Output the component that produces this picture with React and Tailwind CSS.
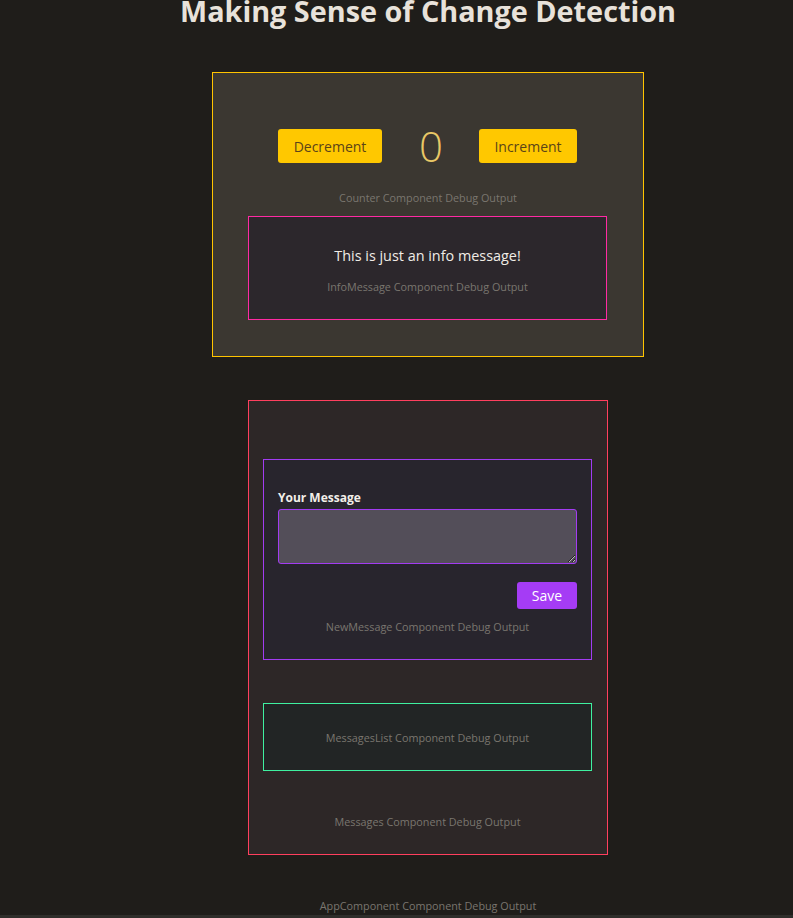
import { useState } from 'react';

const font = { fontFamily: '"Open Sans", "Liberation Sans", sans-serif' };

function DebugOutput({ name, className = '' }) {
  return (
    <p className={`text-[10.8px] leading-4 text-center text-[#7a766f] ${className}`}>
      {name} Component Debug Output
    </p>
  );
}

function InfoMessage() {
  return (
    <div className="self-start ml-[35px] w-[359px] h-[104px] mt-[10px] border border-[#ff2aa3] bg-[#2c272c] pt-[28px]">
      <p className="text-[14.4px] leading-[22px] text-center text-[#f0ece6]">
        This is just an info message!
      </p>
      <DebugOutput name="InfoMessage" className="mt-[12px]" />
    </div>
  );
}

function Counter() {
  const [count, setCount] = useState(0);

  return (
    <div className="w-[432px] h-[285px] border border-[#ffc400] bg-[#3b3731] pt-[56px] flex flex-col items-center">
      <div className="flex items-center h-[34px] self-start ml-[65px]">
        <button
          className="h-[34px] w-[104px] rounded-[3px] bg-[#ffc800] text-[14px] text-[#5b4418]"
          onClick={() => setCount((c) => c - 1)}
        >
          Decrement
        </button>
        <span className="ml-[37px] mr-[36px] text-[42px] font-light leading-none text-[#e9c866]">
          {count}
        </span>
        <button
          className="h-[34px] w-[98px] rounded-[3px] bg-[#ffc800] text-[14px] text-[#5b4418]"
          onClick={() => setCount((c) => c + 1)}
        >
          Increment
        </button>
      </div>
      <DebugOutput name="Counter" className="mt-[27px]" />
      <InfoMessage />
    </div>
  );
}

function NewMessage() {
  return (
    <div className="h-[201px] border border-[#a23cf2] bg-[#28252d] pt-[30px] px-[14px]">
      <label className="block text-[12px] leading-4 font-bold text-[#f3efe9]">
        Your Message
      </label>
      <textarea className="block w-full h-[55px] mt-[3px] rounded-[3px] border border-[#a33cf2] bg-[#534e59] outline-none" />
      <div className="flex justify-end mt-[18px]">
        <button className="w-[60px] h-[27px] rounded-[3px] bg-[#a53cf5] text-[14px] leading-none text-white">
          Save
        </button>
      </div>
      <DebugOutput name="NewMessage" className="mt-[10px]" />
    </div>
  );
}

function MessagesList() {
  return (
    <div className="h-[68px] mt-[43px] border border-[#3ff0a0] bg-[#222525] flex items-center justify-center pt-[2px]">
      <DebugOutput name="MessagesList" />
    </div>
  );
}

function Messages() {
  return (
    <div className="w-[360px] h-[455px] mt-[43px] border border-[#ff3f5e] bg-[#2d2727] pt-[58px] pl-[14px] pr-[15px]">
      <NewMessage />
      <MessagesList />
      <DebugOutput name="Messages" className="mt-[43px]" />
    </div>
  );
}

export default function App() {
  return (
    <div className="h-[918px] bg-[#2f2e2b] overflow-hidden" style={font}>
      <div className="h-[915px] bg-[#1f1d1a] overflow-hidden">
        <div className="w-[856px] flex flex-col items-center">
          <h1 className="mt-[-6px] text-[28.8px] leading-[34px] font-bold text-[#e8e2da]">
            Making Sense of Change Detection
          </h1>
          <div className="mt-[44px]">
            <Counter />
          </div>
          <Messages />
          <DebugOutput name="AppComponent" className="mt-[43px]" />
        </div>
      </div>
    </div>
  );
}
